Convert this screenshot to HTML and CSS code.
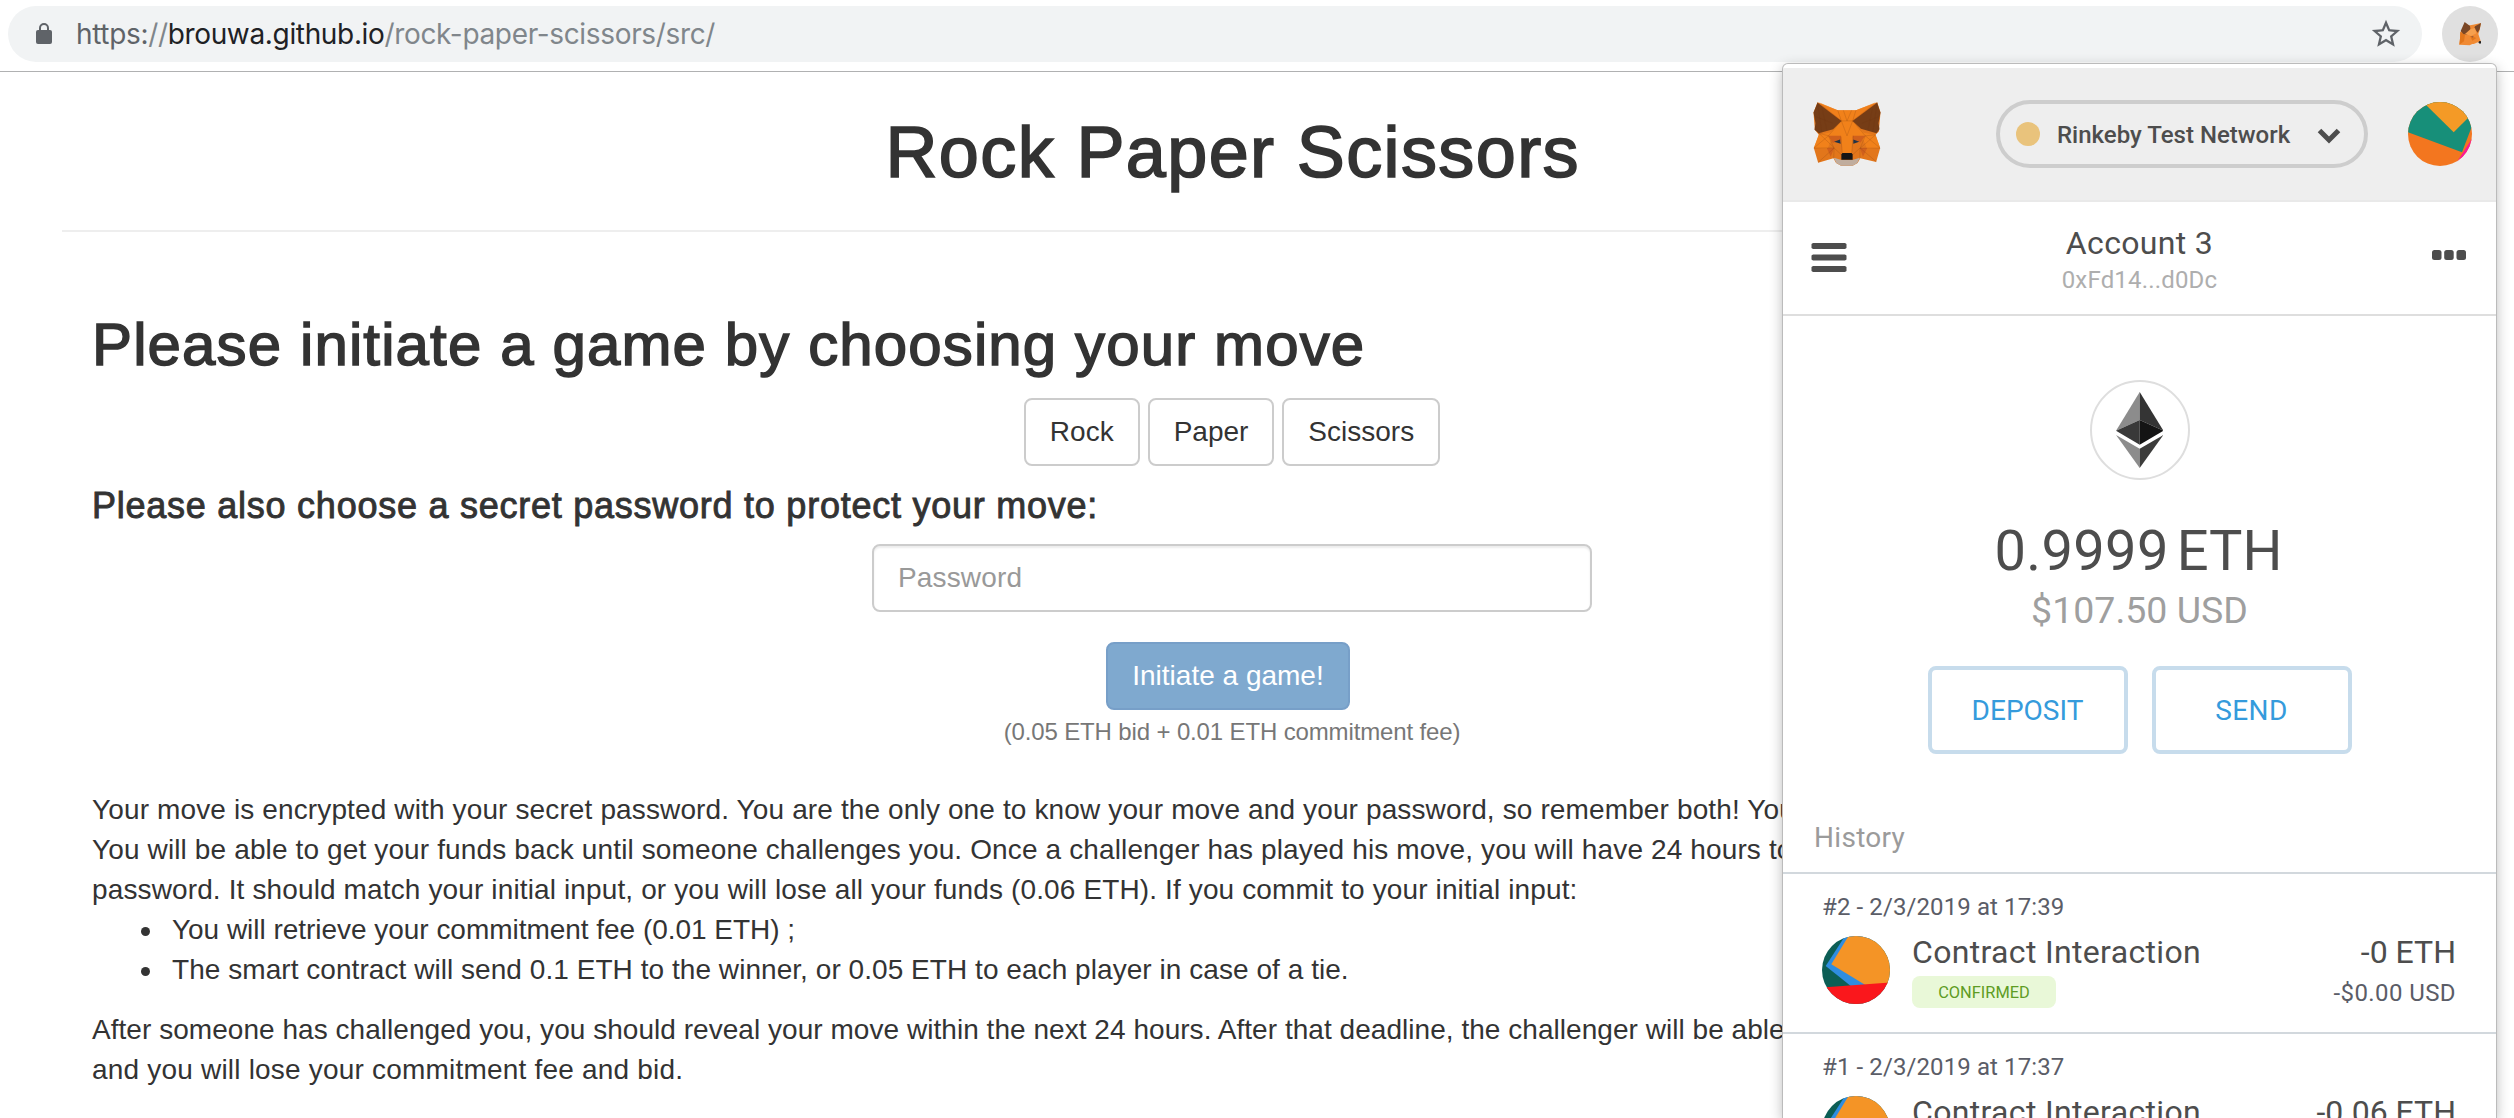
FILE: index.html
```html
<!DOCTYPE html>
<html lang="en">
<head>
<meta charset="utf-8">
<title>Rock Paper Scissors</title>
<link rel="stylesheet" href="styles.css">
</head>
<body>
<header class="toolbar">
  <div class="omnibox">
    <svg class="lock" viewBox="0 0 16 22"><path d="M2 7h12a2 2 0 0 1 2 2v10a2 2 0 0 1-2 2H2a2 2 0 0 1-2-2V9a2 2 0 0 1 2-2z" fill="#5f6368"/><path d="M4 8V5a4 4 0 0 1 8 0v3" fill="none" stroke="#5f6368" stroke-width="2"/></svg>
    <div class="url"><span class="scheme">https:</span>//<span class="host">brouwa.github.io</span>/rock-paper-scissors/src/</div>
    <svg class="star" viewBox="0 0 24 24"><path fill="#5f6368" d="M22 9.24l-7.19-.62L12 2 9.19 8.63 2 9.24l5.46 4.73L5.82 21 12 17.27 18.18 21l-1.63-7.03L22 9.24zM12 15.4l-3.76 2.27 1-4.28-3.32-2.88 4.38-.38L12 6.1l1.71 4.04 4.38.38-3.32 2.88 1 4.28L12 15.4z"/></svg>
  </div>
  <div class="extension">
    <svg class="mini-fox" viewBox="0 0 66 72">
      <path fill="#f08a33" d="M4 30L20 12 42 8 66 3 62 24 58 36 66 60 60 66 40 66 32 70 1 68 3 50z"/>
      <path fill="#e2761b" d="M4 30l14 8-3 20-14 10 2-18zM32 40l20 8-12 8z"/>
      <path fill="#7a4726" d="M17 0l16 12 2 14-10 12-12-2-8-9zM66 3l-18 10-2 6 10 13 6-10z"/>
      <path fill="#f6a04e" d="M18 36l16-14 14-4 4 16-16 8z"/>
      <path fill="#e8ddd5" d="M44 66l20-8 1 6-8 7z"/>
      <path fill="#9b5a35" d="M36 43l8-1-3 5z"/>
      <circle cx="63" cy="61" r="4" fill="#222"/>
    </svg>
  </div>
</header>

<main class="page">
  <h1 class="title">Rock Paper Scissors</h1>
  <section class="game">
    <h2 class="heading">Please initiate a game by choosing your move</h2>
    <div class="moves">
      <button class="btn">Rock</button>
      <button class="btn">Paper</button>
      <button class="btn">Scissors</button>
    </div>
    <h4 class="subheading">Please also choose a secret password to protect your move:</h4>
    <input class="password" type="text" placeholder="Password">
    <button class="btn btn-primary">Initiate a game!</button>
    <div class="fee">(0.05 ETH bid + 0.01 ETH commitment fee)</div>
    <p class="rules">Your move is encrypted with your secret password. You are the only one to know your move and your password, so remember both! You<br>You will be able to get your funds back until someone challenges you. Once a challenger has played his move, you will have 24 hours to<br>password. It should match your initial input, or you will lose all your funds (0.06 ETH). If you commit to your initial input:</p>
    <ul class="outcomes">
      <li class="refund">You will retrieve your commitment fee (0.01 ETH) ;</li>
      <li class="tie">The smart contract will send 0.1 ETH to the winner, or 0.05 ETH to each player in case of a tie.</li>
    </ul>
    <p class="deadline">After someone has challenged you, you should reveal your move within the next 24 hours. After that deadline, the challenger will be able<br><span class="loss">and you will lose your commitment fee and bid.</span></p>
  </section>
</main>

<aside class="wallet">
  <div class="wallet-head">
    <svg class="fox" viewBox="72 66 202 193">
      <path fill="#e2761b" d="M84 67l61 24h55l64-24 10 31-5 57-10 10 14 40-12 42-48-11-8 14-15 8h-35l-15-8-8-14-46 13-13-44 15-40-12-15-4-52z"/>
      <path fill="#f6851b" d="M145 91h55l-10 32 33 36 36 6 14 40-40 1-10-25-34-10-1 54h-30l-1-54-33 10-9 25-42-1 15-40 36-8 32-34z" opacity=".75"/>
      <path fill="#f6851b" d="M88 67l57 24 11 30zM260 67l-60 24-10 30z" opacity=".7"/>
      <path fill="#763d16" d="M84 68l72 55-25 25-43 12-13-10 3-20-6-32zM264 68l-74 55 25 24 47 13 9-12-3-18 6-32z"/>
      <path fill="#d0601c" d="M117 168h37l1 14-25 8zM190 168h38l-14 20-22-6zM112 205l22 0-10 26zM212 205h22l-13 26z"/>
      <path fill="#c0ad9e" d="M133 234l24 7h32l23-7-8 16-14 8h-35l-14-8z"/>
      <path fill="#233447" d="M134 186l18-7 2 13zM192 179l18 7-18 6z"/>
      <path fill="#161616" d="M159 220h28l3 4v16h-34v-16z"/>
      <path fill="none" stroke="#6b3410" stroke-opacity=".45" stroke-width="1.2" d="M84 68l72 55h34l74-55M145 91l11 32-39 45-29-8M200 91l-10 32 38 45 31-3M88 160l46 44-61 1 44-37 17 37-48 43M259 165l-46 40 60 0-45-37-15 37 48 41M156 123l17 45 17-45M154 168l5 52M192 168l-5 52M134 205l22 20M212 205l-22 20M162 91l11 32 14-32M84 68l13 90M264 68l-13 88M78 110l52 20M270 110l-52 20M98 85l14 65M250 85l-14 65M134 205l-1 30M212 205v30"/>
    </svg>
    <div class="network">
      <span class="network-dot"></span>
      <span class="network-name">Rinkeby Test Network</span>
      <svg class="chevron" viewBox="0 0 26 18"><path d="M3.500 3.500L13 13L22.500 3.500" fill="none" stroke="#4d4d4d" stroke-width="5"/></svg>
    </div>
    <svg class="avatar" viewBox="0 0 64 64">
      <defs><clipPath id="round"><circle cx="32" cy="32" r="32"/></clipPath></defs>
      <g clip-path="url(#round)"><path fill="#f3761f" d="M0 0h64v64H0z"/><path fill="#fb1897" d="M64 36.500L48 61.500l16 3z"/><path fill="#178f79" d="M0 30.300L54 50.300 64 24V0H0z"/><path fill="#f49a26" d="M15 0L45.700 30.300 64 12V0z"/></g>
    </svg>
  </div>
  <div class="account">
    <svg class="burger" viewBox="0 0 36 30"><path fill="#4d4d4d" d="M2 0h32l1.500 1v4l-1.500 1H2L.500 5V1zM2 11.500h32l1.500 1v4l-1.500 1H2l-1.500-1v-4zM2 23h32l1.500 1v4l-1.500 1H2l-1.500-1v-4z"/></svg>
    <div class="account-id">
      <div class="account-name">Account 3</div>
      <div class="account-address">0xFd14...d0Dc</div>
    </div>
    <svg class="dots" viewBox="0 0 34 10"><g fill="#4d4d4d"><rect width="9.500" height="10" rx="2.500"/><rect x="12.200" width="9.500" height="10" rx="2.500"/><rect x="24.500" width="9.500" height="10" rx="2.500"/></g></svg>
  </div>
  <div class="balance">
    <div class="coin">
      <svg class="eth" viewBox="0 0 142 228"><path fill="#8c8c8c" d="M71 0v84L0 116z"/><path fill="#343434" d="M71 0v84l71 32z"/><path fill="#393939" d="M71 84v74L0 116z"/><path fill="#141414" d="M71 84v74l71-42z"/><path fill="#8c8c8c" d="M0 129l71 41v58z"/><path fill="#3c3c3b" d="M142 129l-71 41v58z"/></svg>
    </div>
    <div class="amount"><span class="amount-value">0.9999</span><span>ETH</span></div>
    <div class="fiat">$107.50 USD</div>
    <div class="actions">
      <button class="action">DEPOSIT</button>
      <button class="action send">SEND</button>
    </div>
  </div>
  <div class="history">History</div>
  <div class="tx">
    <div class="tx-date">#2 - 2/3/2019 at 17:39</div>
    <div class="tx-row">
      <svg class="tx-icon" viewBox="0 0 68 68">
        <defs><clipPath id="disc"><circle cx="34" cy="34" r="34"/></clipPath></defs>
        <g clip-path="url(#disc)"><path fill="#0c5e55" d="M0 0h68v68H0z"/><path fill="#2f8de0" d="M23 0L3.700 30 30 51h20V0z"/><path fill="#f49426" d="M26.500 0L9.300 28.300 45 50h23V0z"/><path fill="#fa171c" d="M0 51.600l68-5V68H0z"/></g>
      </svg>
      <div class="tx-what"><div class="tx-name">Contract Interaction</div><div class="badge">CONFIRMED</div></div>
      <div class="tx-sum"><div class="tx-eth">-0 ETH</div><div class="tx-usd">-$0.00 USD</div></div>
    </div>
  </div>
  <div class="tx">
    <div class="tx-date">#1 - 2/3/2019 at 17:37</div>
    <div class="tx-row">
      <svg class="tx-icon" viewBox="0 0 68 68"><g clip-path="url(#disc)"><path fill="#0c5e55" d="M0 0h68v68H0z"/><path fill="#2f8de0" d="M23 0L3.700 30 30 51h20V0z"/><path fill="#f49426" d="M26.500 0L9.300 28.300 45 50h23V0z"/><path fill="#fa171c" d="M0 51.600l68-5V68H0z"/></g></svg>
      <div class="tx-what"><div class="tx-name">Contract Interaction</div></div>
      <div class="tx-sum"><div class="tx-eth">-0.06 ETH</div></div>
    </div>
  </div>
</aside>
</body>
</html>
```

FILE: styles.css
```css
* { box-sizing: border-box; }

html { overflow: hidden; }

body {
  margin: 0;
  width: 2514px;
  height: 1118px;
  overflow: hidden;
  position: relative;
  background: #fff;
  color: #333;
  font: 28px/40px "Liberation Sans", Arial, sans-serif;
}

svg { display: block; flex: none; }
button, input { font: inherit; }

/* Browser toolbar */
.toolbar {
  display: flex;
  height: 72px;
  padding: 6px 16px 0 8px;
  gap: 20px;
  border-bottom: 1px solid #b0b1b2;
}
.omnibox {
  display: flex;
  align-items: center;
  width: 2414px;
  height: 56px;
  padding: 0 19px 0 28px;
  border-radius: 28px;
  background: #f1f3f4;
}
.lock { width: 16px; height: 22px; }
.url {
  flex: 1;
  padding-left: 24px;
  font: 28px/40px Inter, sans-serif;
  letter-spacing: -.34px;
  color: #80868b;
}
.scheme { color: #5f6368; }
.host { color: #202124; }
.star { width: 34px; height: 34px; }
.extension {
  display: flex;
  align-items: center;
  justify-content: center;
  width: 56px;
  height: 56px;
  border-radius: 50%;
  background: #e0e0e0;
}
.mini-fox { width: 22px; height: 24px; }

/* Game page */
.page {
  width: 2464px;
  padding: 40px 62px 0;
}
.title {
  margin: 0;
  height: 120px;
  border-bottom: 2px solid #eee;
  font-size: 72px;
  line-height: 80px;
  font-weight: 400;
  letter-spacing: 1.38px;
  text-indent: 1.38px;
  text-align: center;
  -webkit-text-stroke: 1.7px #333;
}
.game {
  display: flex;
  flex-direction: column;
  align-items: center;
  padding: 80px 30px 0;
}
.heading, .subheading, .rules, .outcomes, .deadline { align-self: stretch; }
.heading {
  margin: 0;
  font-size: 60px;
  line-height: 66px;
  font-weight: 400;
  letter-spacing: 1.12px;
  -webkit-text-stroke: 1.5px #333;
}
.moves { display: flex; gap: 8px; padding-top: 20px; }
.btn {
  height: 68px;
  padding: 0 24px;
  border: 2px solid #ccc;
  border-radius: 8px;
  background: #fff;
  color: #333;
  line-height: 40px;
}
.subheading {
  margin: 20px 0 18px;
  font-size: 36px;
  line-height: 40px;
  font-weight: 400;
  letter-spacing: .75px;
  -webkit-text-stroke: .9px #333;
}
.password {
  width: 720px;
  height: 68px;
  padding: 0 24px;
  border: 2px solid #ccc;
  border-radius: 8px;
  box-shadow: inset 0 2px 2px rgba(0, 0, 0, .075);
  letter-spacing: .15px;
}
.password::placeholder { color: #999; }
.btn-primary {
  margin: 30px 8px 0 0;
  border-color: #779fc8;
  background: #7fa9cf;
  color: #fff;
}
.fee {
  margin-top: 5px;
  font-size: 24px;
  line-height: 34px;
  letter-spacing: -.14px;
  color: #777;
}
.rules, .deadline { margin: 41px 0 0; white-space: nowrap; letter-spacing: .13px; }
.outcomes { margin: 0; padding-left: 49px; list-style: none; }
.outcomes li { display: flex; align-items: center; gap: 22px; }
.outcomes li::before {
  content: "";
  width: 9px;
  height: 9px;
  margin-top: 3px;
  border-radius: 50%;
  background: #333;
}
.refund { letter-spacing: -.03px; }
.tie { letter-spacing: .05px; }
.deadline { margin-top: 20px; letter-spacing: .04px; }
.loss { letter-spacing: .2px; }

/* Wallet popup */
.wallet {
  position: absolute;
  left: 1783px;
  top: 64px;
  width: 713px;
  height: 1054px;
  overflow: hidden;
  padding-top: 4px;
  border-radius: 5px 5px 0 0;
  background: #fff;
  box-shadow: 0 0 0 1px #bbb, 0 4px 14px rgba(0, 0, 0, .3);
  color: #4d4d4d;
  font-family: Roboto, sans-serif;
}
.wallet-head {
  display: flex;
  align-items: center;
  height: 134px;
  padding: 0 24px 0 31px;
  border-bottom: 2px solid #e9e9e9;
  background: #eee;
}
.fox { width: 68px; height: 64px; margin-left: -1px; }
.network {
  display: flex;
  align-items: center;
  width: 372px;
  height: 68px;
  margin-left: 115px;
  margin-right: 40px;
  padding: 0 22px 0 16px;
  border: 4px solid #cdcdcd;
  border-radius: 34px;
}
.network-dot { width: 24px; height: 24px; border-radius: 50%; background: #e9c37c; }
.network-name { flex: 1; padding: 2px 0 0 17px; font-size: 24px; line-height: 28px; font-weight: 500; }
.chevron { width: 26px; height: 18px; margin-top: 3px; }
.avatar { width: 64px; height: 64px; }
.account {
  display: flex;
  justify-content: space-between;
  height: 114px;
  padding: 22px 30px 0 28px;
  border-bottom: 2px solid #dedede;
}
.burger { width: 36px; height: 30px; margin-top: 19px; }
.account-id { text-align: center; }
.account-name { font-size: 32px; line-height: 38px; letter-spacing: .33px; }
.account-address { margin-top: 4px; font-size: 24px; line-height: 28px; letter-spacing: .18px; color: #aeaeae; }
.dots { width: 34px; height: 10px; margin-top: 26px; }
.balance { display: flex; flex-direction: column; align-items: center; padding-top: 64px; }
.coin {
  display: flex;
  align-items: center;
  justify-content: center;
  width: 100px;
  height: 100px;
  border: 2px solid #dedede;
  border-radius: 50%;
}
.eth { width: 47.400px; height: 76px; }
.amount { display: flex; gap: 8px; margin-top: 38px; margin-right: 2px; font-size: 56px; line-height: 66px; }
.amount-value { letter-spacing: .35px; }
.fiat { margin-top: 4px; font-size: 37.500px; line-height: 44px; color: #9f9f9f; }
.actions { display: flex; gap: 24px; margin-top: 34px; }
.action {
  width: 200px;
  height: 88px;
  padding: 2px 0 0;
  border: 4px solid #c7dcec;
  border-radius: 8px;
  background: #fff;
  color: #359bdc;
  font-size: 28px;
}
.send { letter-spacing: .4px; }
.history {
  height: 120px;
  padding: 67px 31px 0;
  border-bottom: 2px solid #d2d8dd;
  font-size: 28px;
  line-height: 34px;
  letter-spacing: .3px;
  color: #9b9b9b;
}
.tx { height: 160px; padding: 19px 40px 0 39px; border-bottom: 2px solid #d2d8dd; }
.tx-date { font-size: 24px; line-height: 28px; letter-spacing: .1px; color: #5b5d67; }
.tx-row { display: flex; padding-top: 12px; }
.tx-icon { width: 68px; height: 68px; margin-top: 3px; }
.tx-what { flex: 1; padding-left: 22px; }
.tx-name { font-size: 32px; line-height: 38px; letter-spacing: .33px; }
.badge {
  width: 144px;
  height: 32px;
  margin-top: 5px;
  border-radius: 8px;
  background: #e9f8d8;
  color: #5e9c24;
  font-size: 16.400px;
  line-height: 33px;
  text-align: center;
}
.tx-sum { text-align: right; }
.tx-eth { font-size: 32px; line-height: 38px; }
.tx-usd { margin-top: 8px; font-size: 24px; line-height: 28px; letter-spacing: .4px; color: #5b5d67; }
```
